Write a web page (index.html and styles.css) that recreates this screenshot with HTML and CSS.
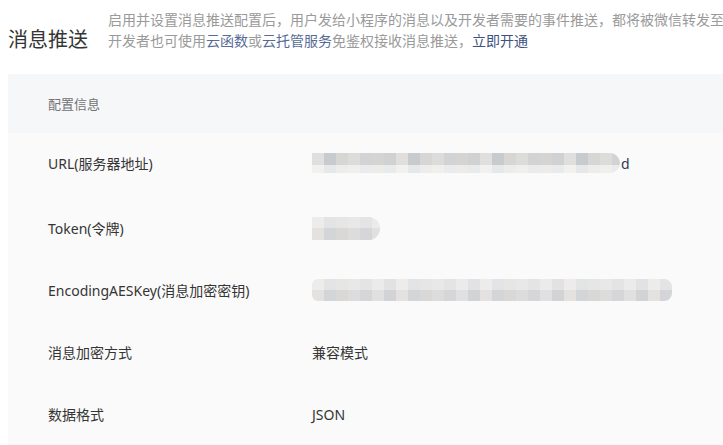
FILE: index.html
```html
<!DOCTYPE html>
<html lang="zh-CN">
<head>
<meta charset="utf-8">
<title>消息推送</title>
<link rel="stylesheet" href="styles.css">
</head>
<body>
<div class="page">
  <header class="head">
    <h1 class="title">消息推送</h1>
    <div class="desc">
      <p class="line">启用并设置消息推送配置后，用户发给小程序的消息以及开发者需要的事件推送，都将被微信转发至</p>
      <p class="line">开发者也可使用<a class="link">云函数</a>或<a class="link">云托管服务</a>免鉴权接收消息推送，<a class="link strong">立即开通</a></p>
    </div>
  </header>
  <section class="card">
    <div class="card-head">配置信息</div>
    <div class="row row-first">
      <div class="label">URL(服务器地址)</div>
      <div class="value"><span class="blur blur-url dark-top"></span><span class="tail">d</span></div>
    </div>
    <div class="row">
      <div class="label">Token(令牌)</div>
      <div class="value"><span class="blur blur-token"></span></div>
    </div>
    <div class="row">
      <div class="label">EncodingAESKey(消息加密密钥)</div>
      <div class="value"><span class="blur blur-aes"></span></div>
    </div>
    <div class="row">
      <div class="label">消息加密方式</div>
      <div class="value">兼容模式</div>
    </div>
    <div class="row">
      <div class="label">数据格式</div>
      <div class="value">JSON</div>
    </div>
  </section>
</div>
</body>
</html>
```
FILE: styles.css
```css
html, body {
  margin: 0;
  padding: 0;
  overflow: hidden;
  background: #ffffff;
}
body {
  font-family: "Noto Sans", "Noto Sans CJK SC", sans-serif;
  color: #353535;
}
.page {
  padding-left: 8px;
  width: 1000px;
}
.head {
  display: flex;
  align-items: flex-end;
  height: 51px;
  padding-top: 8px;
  box-sizing: border-box;
  margin-bottom: 23px;
}
.title {
  margin: 0;
  width: 100px;
  font-size: 20px;
  font-weight: normal;
  line-height: 24px;
  color: #353535;
  font-family: "Noto Sans CJK SC", sans-serif;
}
.desc {
  font-family: "Noto Sans CJK SC", sans-serif;
  font-size: 14px;
  color: #9a9a9a;
  line-height: 21px;
}
.line {
  margin: 0;
  white-space: nowrap;
}
.link {
  color: #576b95;
}
.strong {
  color: #3e5180;
}
.card {
  background: #fafafa;
  padding-left: 40px;
}
.card-head {
  height: 59px;
  margin-left: -40px;
  padding-left: 40px;
  background: #f6f7f9;
  display: flex;
  align-items: center;
  font-size: 13px;
  color: #737373;
  font-family: "Noto Sans CJK SC", sans-serif;
}
.row {
  display: flex;
  align-items: center;
  height: 62px;
  font-size: 14px;
}
.row-first {
  height: 60px;
  margin-bottom: 4px;
}
.label {
  width: 264px;
  flex: none;
}
.value {
  display: flex;
  align-items: center;
}
.tail {
  color: #2f3a55;
  margin-left: 1px;
}
.blur {
  display: block;
  border-radius: 0 10px 10px 0;
  background-image:
    linear-gradient(180deg, rgba(255,255,255,0.35) 0 50%, rgba(255,255,255,0) 50% 100%),
    repeating-linear-gradient(90deg, #e3e2e0 0 12px, #d3d5d8 12px 24px, #d9d8d6 24px 36px, #dcdcdc 36px 48px, #d6d6d8 48px 60px, #e0e0e0 60px 72px, #d2d3d5 72px 84px);
}
.dark-top {
  background-image:
    linear-gradient(180deg, rgba(255,255,255,0) 0 60%, rgba(255,255,255,0.55) 60% 100%),
    repeating-linear-gradient(90deg, #e1dfdd 0 12px, #c8cbce 12px 24px, #d7d6d4 24px 36px, #dcdcda 36px 48px, #d2d3d5 48px 60px, #d5d4d2 60px 72px, #cfd1d2 72px 84px);
}
.blur-url {
  width: 308px;
  height: 20px;
}
.blur-token {
  width: 68px;
  height: 23px;
  border-radius: 0 12px 12px 0;
}
.blur-aes {
  width: 360px;
  height: 22px;
  border-radius: 6px 8px 8px 6px;
}
```
